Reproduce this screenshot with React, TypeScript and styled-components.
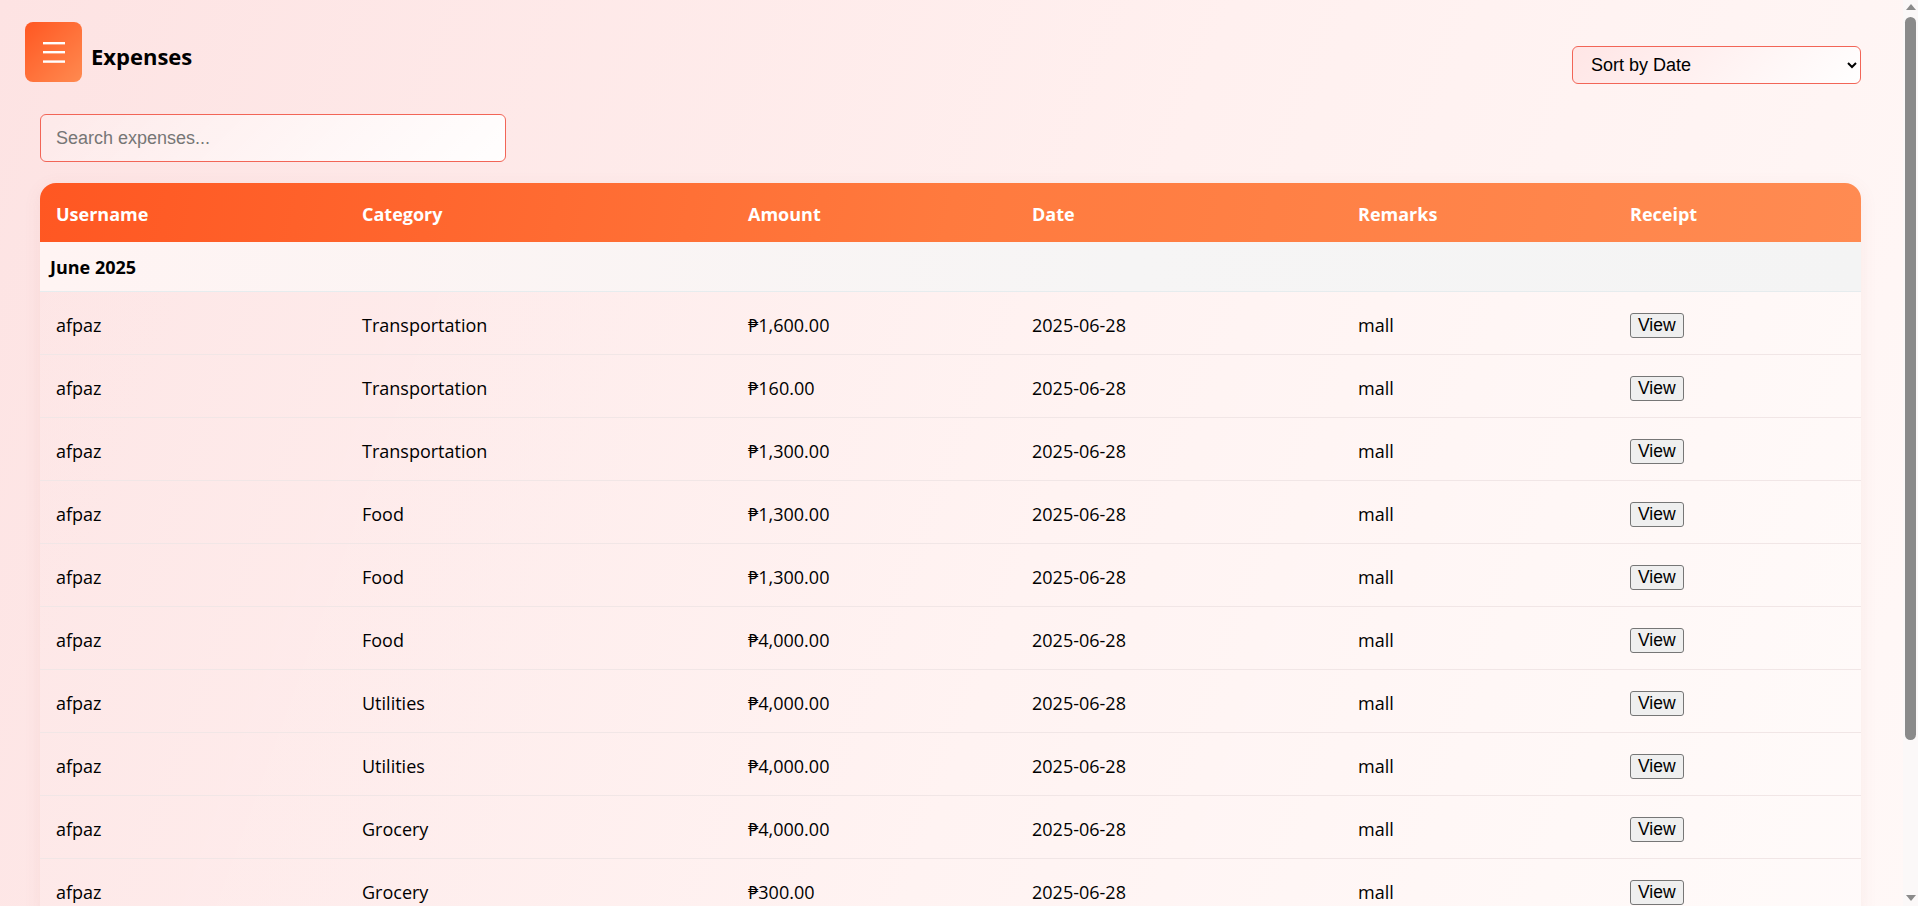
import React from "react";
import styled, { createGlobalStyle } from "styled-components";

const GlobalStyle = createGlobalStyle`
  html, body {
    margin: 0;
    padding: 0;
  }
  body {
    font-family: "Open Sans", "Noto Sans", sans-serif;
    background: linear-gradient(110deg, #fde3e3 0%, #fff0ef 55%, #fff8f7 100%);
    background-attachment: fixed;
    color: #000;
  }
`;

const Page = styled.div`
  min-height: 100vh;
  margin-right: 15px;
  padding-bottom: 180px;
`;

const ScrollTrack = styled.div`
  position: fixed;
  top: 0;
  right: 0;
  bottom: 0;
  width: 15px;
  background: #fbf8f8;
  display: flex;
  flex-direction: column;
  align-items: center;
`;

const ArrowUp = styled.div`
  margin-top: 4px;
  width: 0;
  height: 0;
  border-left: 5px solid transparent;
  border-right: 5px solid transparent;
  border-bottom: 6px solid #8a8a8a;
`;

const ArrowDown = styled.div`
  margin-top: auto;
  margin-bottom: 5px;
  width: 0;
  height: 0;
  border-left: 5px solid transparent;
  border-right: 5px solid transparent;
  border-top: 6px solid #8a8a8a;
`;

const Thumb = styled.div`
  margin-top: 7px;
  width: 11px;
  height: 723px;
  border-radius: 6px;
  background: #8a8a8a;
`;

const TopBar = styled.header`
  display: flex;
  justify-content: space-between;
  align-items: flex-start;
  padding: 22px 42px 0 25px;
`;

const Brand = styled.div`
  display: flex;
  align-items: center;
  gap: 9px;
`;

const MenuButton = styled.button`
  width: 57px;
  height: 60px;
  border: none;
  border-radius: 8px;
  background: linear-gradient(135deg, #ff5722 0%, #ff8a50 100%);
  display: flex;
  align-items: center;
  justify-content: center;
  padding: 0;
  cursor: pointer;
`;

const Title = styled.h1`
  margin: 7px 0 0;
  font-size: 22px;
  font-weight: 700;
  line-height: 30px;
`;

const SortSelect = styled.select`
  margin-top: 24px;
  width: 289px;
  height: 38px;
  padding: 0 14px;
  font-family: "Liberation Sans", Arial, sans-serif;
  font-size: 18px;
  color: #000;
  border: 1px solid #f26557;
  border-radius: 6px;
  background: linear-gradient(135deg, rgba(255, 228, 228, 0.9) 0%, rgba(255, 255, 255, 0.95) 100%);
  outline: none;
`;

const Content = styled.main`
  padding: 0 42px 0 40px;
`;

const SearchInput = styled.input`
  display: block;
  box-sizing: border-box;
  margin-top: 30px;
  width: 466px;
  height: 48px;
  padding: 0 15px;
  font-family: "Liberation Sans", Arial, sans-serif;
  font-size: 18px;
  border: 1px solid #f26557;
  border-radius: 6px;
  background: linear-gradient(135deg, rgba(255, 255, 255, 0.2) 0%, rgba(255, 255, 255, 0.95) 100%);
  outline: none;
  &::placeholder {
    color: #767676;
  }
`;

const TableCard = styled.div`
  margin-top: 21px;
  border-radius: 16px;
  overflow: hidden;
  box-shadow: 0 4px 18px rgba(180, 90, 80, 0.08);
  background: linear-gradient(110deg, rgba(255, 255, 255, 0.05) 0%, rgba(255, 255, 255, 0.35) 100%);
`;

const Table = styled.table`
  width: 100%;
  border-collapse: collapse;
  table-layout: fixed;
  font-size: 18px;
`;

const HeadRow = styled.tr`
  height: 59px;
  background: linear-gradient(100deg, #ff5722 0%, #ff7a3e 50%, #ff8b52 100%);
`;

const HeadCell = styled.th`
  text-align: left;
  color: #fff;
  font-weight: 700;
  padding: 2px 16px 0;
  vertical-align: middle;
`;

const GroupRow = styled.tr`
  height: 49px;
  background: linear-gradient(90deg, #fff4f3 0%, #f6f5f5 60%, #f4f4f4 100%);
  border-bottom: 1px solid #e6ecee;
`;

const GroupCell = styled.td`
  padding: 2px 10px 0;
  font-weight: 700;
  vertical-align: middle;
`;

const BodyRow = styled.tr`
  height: 63px;
  border-bottom: 1px solid #f1e6e6;
`;

const Cell = styled.td`
  padding: 4px 16px 0;
  vertical-align: middle;
  white-space: nowrap;
`;

const ViewButton = styled.button`
  height: 25px;
  padding: 0 7px;
  font-family: "Liberation Sans", Arial, sans-serif;
  font-size: 17.5px;
  color: #000;
  background: #efefef;
  border: 1px solid #767676;
  border-radius: 3px;
  cursor: pointer;
`;

const MenuIcon = () => (
  <svg width="24" height="22" viewBox="0 0 24 22" aria-hidden="true">
    <rect x="1" y="1" width="22" height="2.4" fill="#fff" />
    <rect x="1" y="10" width="22" height="2.4" fill="#fff" />
    <rect x="1" y="19.4" width="22" height="2.4" fill="#fff" />
  </svg>
);

type Expense = {
  username: string;
  category: string;
  amount: string;
  date: string;
  remarks: string;
};

const expenses: Expense[] = [
  { username: "afpaz", category: "Transportation", amount: "₱1,600.00", date: "2025-06-28", remarks: "mall" },
  { username: "afpaz", category: "Transportation", amount: "₱160.00", date: "2025-06-28", remarks: "mall" },
  { username: "afpaz", category: "Transportation", amount: "₱1,300.00", date: "2025-06-28", remarks: "mall" },
  { username: "afpaz", category: "Food", amount: "₱1,300.00", date: "2025-06-28", remarks: "mall" },
  { username: "afpaz", category: "Food", amount: "₱1,300.00", date: "2025-06-28", remarks: "mall" },
  { username: "afpaz", category: "Food", amount: "₱4,000.00", date: "2025-06-28", remarks: "mall" },
  { username: "afpaz", category: "Utilities", amount: "₱4,000.00", date: "2025-06-28", remarks: "mall" },
  { username: "afpaz", category: "Utilities", amount: "₱4,000.00", date: "2025-06-28", remarks: "mall" },
  { username: "afpaz", category: "Grocery", amount: "₱4,000.00", date: "2025-06-28", remarks: "mall" },
  { username: "afpaz", category: "Grocery", amount: "₱300.00", date: "2025-06-28", remarks: "mall" },
];

const columns = [
  { label: "Username", width: 306 },
  { label: "Category", width: 386 },
  { label: "Amount", width: 284 },
  { label: "Date", width: 326 },
  { label: "Remarks", width: 272 },
  { label: "Receipt", width: 247 },
];

export default function App() {
  return (
    <>
      <GlobalStyle />
      <Page>
        <TopBar>
          <Brand>
            <MenuButton aria-label="Menu">
              <MenuIcon />
            </MenuButton>
            <Title>Expenses</Title>
          </Brand>
          <SortSelect defaultValue="date">
            <option value="date">Sort by Date</option>
            <option value="amount">Sort by Amount</option>
            <option value="category">Sort by Category</option>
          </SortSelect>
        </TopBar>
        <Content>
          <SearchInput placeholder="Search expenses..." />
          <TableCard>
            <Table>
              <colgroup>
                {columns.map((c) => (
                  <col key={c.label} style={{ width: c.width }} />
                ))}
              </colgroup>
              <thead>
                <HeadRow>
                  {columns.map((c) => (
                    <HeadCell key={c.label}>{c.label}</HeadCell>
                  ))}
                </HeadRow>
              </thead>
              <tbody>
                <GroupRow>
                  <GroupCell colSpan={6}>June 2025</GroupCell>
                </GroupRow>
                {expenses.map((e, i) => (
                  <BodyRow key={i}>
                    <Cell>{e.username}</Cell>
                    <Cell>{e.category}</Cell>
                    <Cell>{e.amount}</Cell>
                    <Cell>{e.date}</Cell>
                    <Cell>{e.remarks}</Cell>
                    <Cell>
                      <ViewButton>View</ViewButton>
                    </Cell>
                  </BodyRow>
                ))}
              </tbody>
            </Table>
          </TableCard>
        </Content>
      </Page>
      <ScrollTrack aria-hidden="true">
        <ArrowUp />
        <Thumb />
        <ArrowDown />
      </ScrollTrack>
    </>
  );
}
